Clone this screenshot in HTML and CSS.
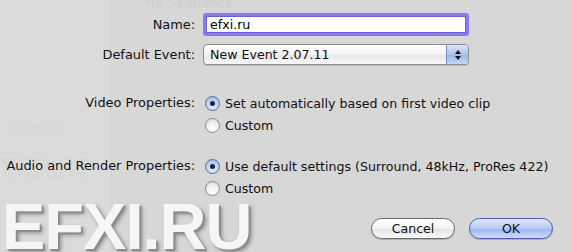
FILE: index.html
```html
<!DOCTYPE html>
<html lang="ru">

<head>
    <meta charset="utf-8">
    <title>New Event</title>
    <link rel="stylesheet" href="styles.css">
</head>

<body>
    <div class="backdrop">
        <div class="ghost_side">
            <span class="ghost_events">o Events</span>
            <span class="ghost_line ghost_first">rom iMovie Library</span>
            <span class="ghost_line">s to Final Cut Pro</span>
        </div>
        <div class="ghost_top">No Sequence</div>
    </div>

    <form class="dialog">
        <div class="row row_name">
            <label class="label" for="name">Name:</label>
            <input id="name" class="text_field" type="text" value="efxi.ru">
        </div>

        <div class="row row_event">
            <span class="label">Default Event:</span>
            <div class="popup">
                <span class="popup_text">New Event 2.07.11</span>
                <span class="popup_arrows">
                    <svg width="8" height="12" viewBox="0 0 8 12">
                        <path d="M4 1 L7 5 L1 5 Z" fill="#111" />
                        <path d="M4 11 L7 7 L1 7 Z" fill="#111" />
                    </svg>
                </span>
            </div>
        </div>

        <div class="group group_video">
            <span class="label">Video Properties:</span>
            <div class="radios">
                <div class="radio_row"><span class="radio on"></span>Set automatically based on first video clip</div>
                <div class="radio_row"><span class="radio"></span>Custom</div>
            </div>
        </div>

        <div class="group group_audio">
            <span class="label">Audio and Render Properties:</span>
            <div class="radios">
                <div class="radio_row"><span class="radio on"></span>Use default settings (Surround, 48kHz, ProRes 422)</div>
                <div class="radio_row"><span class="radio"></span>Custom</div>
            </div>
        </div>

        <div class="buttons">
            <button type="button" class="btn">Cancel</button>
            <button type="button" class="btn btn_ok">OK</button>
        </div>
    </form>

    <div class="watermark">EFXI.RU</div>
</body>

</html>
```

FILE: styles.css
```css
body {
    margin: 0;
    width: 572px;
    height: 252px;
    overflow: hidden;
    position: relative;
    font-family: "DejaVu Sans", sans-serif;
    font-size: 12.6px;
    color: #111;
    background-color: #d7d7d7;
}

/* --------- BACKDROP (faded window behind the sheet) --------- */
.backdrop {
    position: absolute;
    inset: 0;
    display: flex;
}

.ghost_side {
    width: 110px;
    height: 100%;
    display: flex;
    flex-direction: column;
    background-color: #dbdbdb;
    border-right: 1px solid #d3d3d3;
}

.ghost_events {
    margin-top: 119px;
    margin-left: -10px;
    font-weight: bold;
    font-size: 15px;
    white-space: nowrap;
    color: #d2dae1;
}

.ghost_line {
    margin-left: -6px;
    font-size: 11px;
    white-space: nowrap;
    color: #d5d5d5;
}

.ghost_first {
    margin-top: 18px;
}

.ghost_top {
    margin-left: 34px;
    margin-top: -4px;
    font-weight: bold;
    font-size: 12px;
    color: #d0d0d0;
}

/* --------- DIALOG --------- */
.dialog {
    position: relative;
    display: flex;
    flex-direction: column;
    padding-top: 13px;
}

.row,
.group {
    display: flex;
    gap: 8px;
}

.row {
    align-items: center;
}

.label {
    width: 195px;
    flex: none;
    text-align: right;
    white-space: nowrap;
    font-size: 12.9px;
}

.row_event {
    margin-top: 8px;
}

.group .label {
    line-height: 22px;
}

.group_video {
    margin-top: 27px;
}

.group_audio {
    margin-top: 19px;
}

.text_field {
    box-sizing: border-box;
    width: 266px;
    height: 23px;
    margin: 0;
    padding: 0 0 0 4px;
    border: 3px solid #8a7cf0;
    border-radius: 3px;
    font-family: "DejaVu Sans", sans-serif;
    font-size: 12.6px;
    color: #000;
    background-color: #fff;
    box-shadow: inset 0 0 0 1px #6c5fd6;
    outline: none;
}

.popup {
    box-sizing: border-box;
    width: 266px;
    height: 21px;
    display: flex;
    align-items: center;
    border: 1px solid #8f8f8f;
    border-radius: 4px;
    background: linear-gradient(#ffffff, #f2f2f2 50%, #e6e6e6 51%, #f7f7f7);
    box-shadow: 0 1px 1px rgba(0, 0, 0, 0.15);
    overflow: hidden;
}

.popup_text {
    flex: 1;
    padding-left: 6px;
}

.popup_arrows {
    width: 21px;
    height: 100%;
    display: flex;
    align-items: center;
    justify-content: center;
    border-left: 1px solid #7d8fc9;
    background: linear-gradient(#d8e2f8, #aec3ee 50%, #97b1ea 51%, #c7d6f6);
}

/* --------- RADIOS --------- */
.radios {
    display: flex;
    flex-direction: column;
}

.radio_row {
    height: 22px;
    display: flex;
    align-items: center;
    gap: 5px;
    margin-left: 2px;
    white-space: nowrap;
}

.radio {
    box-sizing: border-box;
    width: 15px;
    height: 15px;
    display: flex;
    align-items: center;
    justify-content: center;
    border: 1px solid #8a8a8a;
    border-radius: 50%;
    background: radial-gradient(circle at 50% 75%, #ffffff, #f0f0f0 50%, #d4d4d4);
}

.radio.on {
    border-color: #5c6f9c;
    background: radial-gradient(circle at 50% 70%, #e6eefc, #b8cdf2 60%, #8ea9dc);
}

.radio.on::after {
    content: "";
    width: 5px;
    height: 5px;
    border-radius: 50%;
    background-color: #1c2436;
}

/* --------- BUTTONS --------- */
.buttons {
    display: flex;
    justify-content: flex-end;
    gap: 14px;
    padding-right: 19px;
    margin-top: 19px;
}

.btn {
    box-sizing: border-box;
    width: 84px;
    height: 21px;
    padding: 0;
    border: 1px solid #6b6b6b;
    border-radius: 11px;
    font-family: "DejaVu Sans", sans-serif;
    font-size: 12.6px;
    color: #111;
    background: linear-gradient(#ffffff, #f3f3f3 50%, #e2e2e2 51%, #fafafa);
    box-shadow: 0 1px 1px rgba(0, 0, 0, 0.2);
}

.btn_ok {
    border-color: #4a5fa8;
    background: linear-gradient(#dfe8fb, #b5c9f3 50%, #9bb6ee 51%, #cfdcf8);
}

/* --------- WATERMARK --------- */
.watermark {
    position: absolute;
    left: 2px;
    bottom: -12px;
    font-family: "Liberation Sans", sans-serif;
    font-weight: bold;
    font-size: 65px;
    letter-spacing: -1px;
    color: #f6f6f6;
    text-shadow: 2px 2px 1px #8c8c8c, 3px 3px 4px rgba(0, 0, 0, 0.35);
}
```
